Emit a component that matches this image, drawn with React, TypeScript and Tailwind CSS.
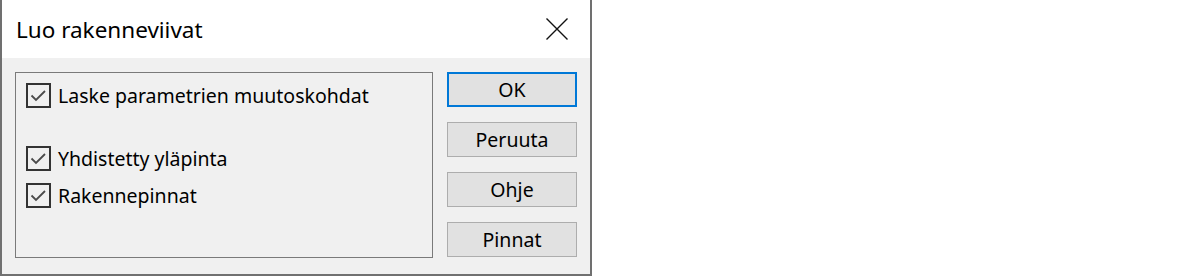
import React from "react";

const font = { fontFamily: '"Noto Sans", "Open Sans", sans-serif' };

function Check({ label }: { label: string }) {
  return (
    <div className="flex items-center h-[25px]">
      <div className="w-[25px] h-[25px] border-2 border-[#333333] bg-[#f0f0f0] flex items-center justify-center shrink-0">
        <svg width="21" height="21" viewBox="0 0 21 21">
          <path d="M3.5 10.5 L8 15 L17 6" fill="none" stroke="#4a4a4a" strokeWidth="1.8" />
        </svg>
      </div>
      <span className="ml-[7px] text-[19.5px] leading-none text-black">{label}</span>
    </div>
  );
}

function Btn({ label, primary }: { label: string; primary?: boolean }) {
  return (
    <div
      className={
        "w-[130px] h-[35px] flex items-center justify-center bg-[#e1e1e1] text-[19.5px] leading-none text-black " +
        (primary ? "border-2 border-[#0078d7]" : "border border-[#adadad]")
      }
    >
      {label}
    </div>
  );
}

export default function App() {
  return (
    <div className="w-[1200px] h-[276px] bg-white flex" style={font}>
      <div className="w-[592px] h-[276px] border-l-2 border-r-2 border-b-2 border-[#707070] flex flex-col">
        <div className="h-[58px] bg-white flex items-center justify-between pl-[14px] pr-[20px] shrink-0">
          <span className="text-[22.5px] text-black leading-none mt-[2px]">Luo rakenneviivat</span>
          <svg width="24" height="24" viewBox="0 0 24 24" className="mr-[1px]">
            <path d="M1.5 1.5 L22.5 22.5 M22.5 1.5 L1.5 22.5" stroke="#111" strokeWidth="1.4" fill="none" />
          </svg>
        </div>
        <div className="flex-1 bg-[#f0f0f0] flex pl-[13px] pt-[14px]">
          <div className="w-[418px] h-[186px] border border-[#7a7a7a] flex flex-col pl-[10px] pt-[10px]">
            <Check label="Laske parametrien muutoskohdat" />
            <div className="h-[38px]" />
            <Check label="Yhdistetty yläpinta" />
            <div className="h-[12px]" />
            <Check label="Rakennepinnat" />
          </div>
          <div className="ml-[14px] flex flex-col gap-[15px]">
            <Btn label="OK" primary />
            <Btn label="Peruuta" />
            <Btn label="Ohje" />
            <Btn label="Pinnat" />
          </div>
        </div>
      </div>
    </div>
  );
}
